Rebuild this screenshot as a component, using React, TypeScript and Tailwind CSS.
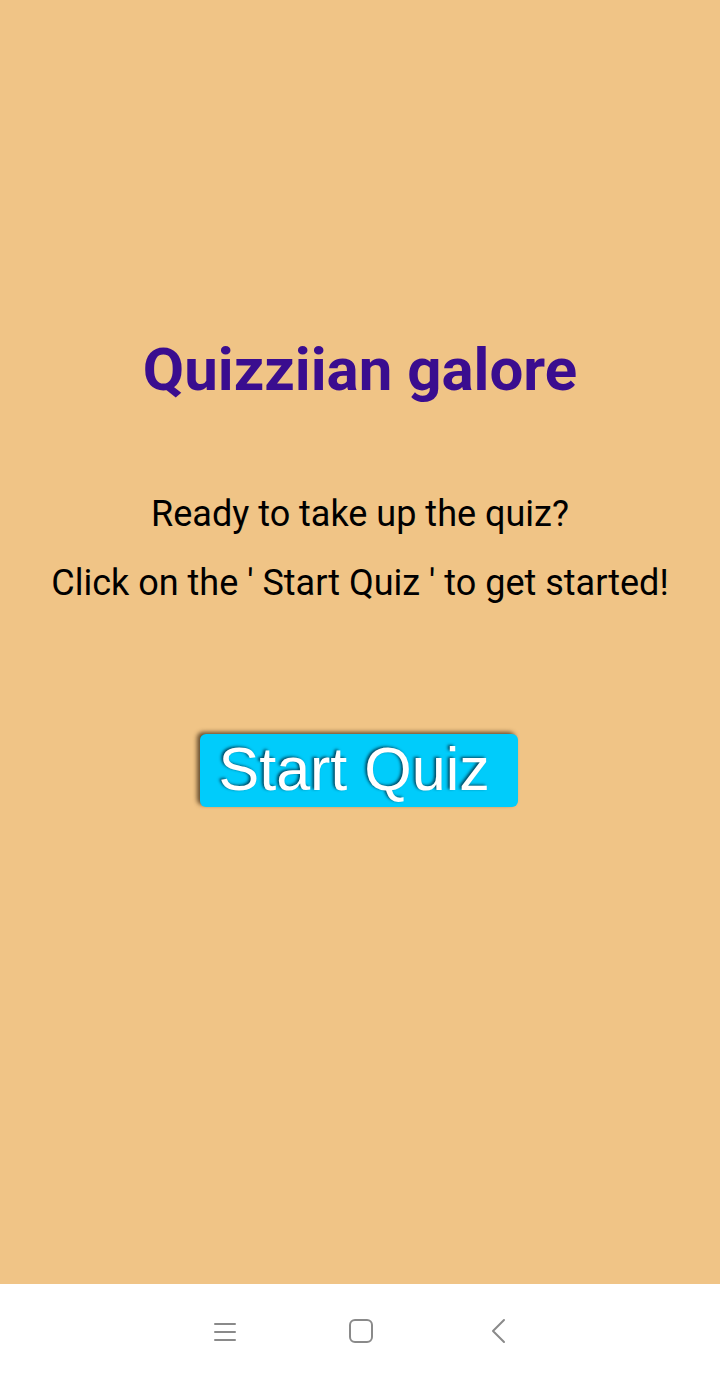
import React from "react";

export default function App() {
  return (
    <div className="w-[720px] h-[1380px] flex flex-col bg-white" style={{ fontFamily: "Roboto, 'Liberation Sans', sans-serif" }}>
      <div className="h-[1284px] bg-[#f0c486] flex flex-col items-center">
        <h1 className="mt-[334px] text-[60px] leading-[72px] font-bold text-[#3a0d8f] font-['Roboto',sans-serif]">Quizziian galore</h1>
        <p className="mt-[84px] text-[36px] leading-[48px] text-black">Ready to take up the quiz?</p>
        <p className="mt-[21px] text-[36px] leading-[48px] text-black">Click on the ' Start Quiz ' to get started!</p>
        <button className="mt-[127px] ml-[-3px] w-[318px] h-[73px] rounded-[6px] bg-[#00ccfb] text-white text-[61px] leading-[70px] font-['Liberation_Sans',Arial,sans-serif] shadow-[-3px_-2px_4px_rgba(60,40,20,0.75)] [text-shadow:-2px_-1px_3px_rgba(0,40,60,0.8)] flex items-center pl-[19px] pb-[3px]">
          Start Quiz
        </button>
      </div>
      <div className="h-[96px] bg-white flex items-center justify-center pb-[3px]">
        <svg width="24" height="22" viewBox="0 0 24 22" className="mt-[2px] mr-[111px]">
          <g stroke="#8a8a8a" strokeWidth="2" strokeLinecap="round">
            <line x1="2" y1="3" x2="22" y2="3" />
            <line x1="2" y1="11" x2="22" y2="11" />
            <line x1="2" y1="19" x2="22" y2="19" />
          </g>
        </svg>
        <svg width="26" height="26" viewBox="0 0 26 26" className="mr-[117px]">
          <rect x="2" y="2" width="22" height="22" rx="5" fill="none" stroke="#8a8a8a" strokeWidth="2" />
        </svg>
        <svg width="16" height="26" viewBox="0 0 16 26">
          <polyline points="13,2 2,13 13,24" fill="none" stroke="#8a8a8a" strokeWidth="2" strokeLinejoin="round" strokeLinecap="round" />
        </svg>
      </div>
    </div>
  );
}
